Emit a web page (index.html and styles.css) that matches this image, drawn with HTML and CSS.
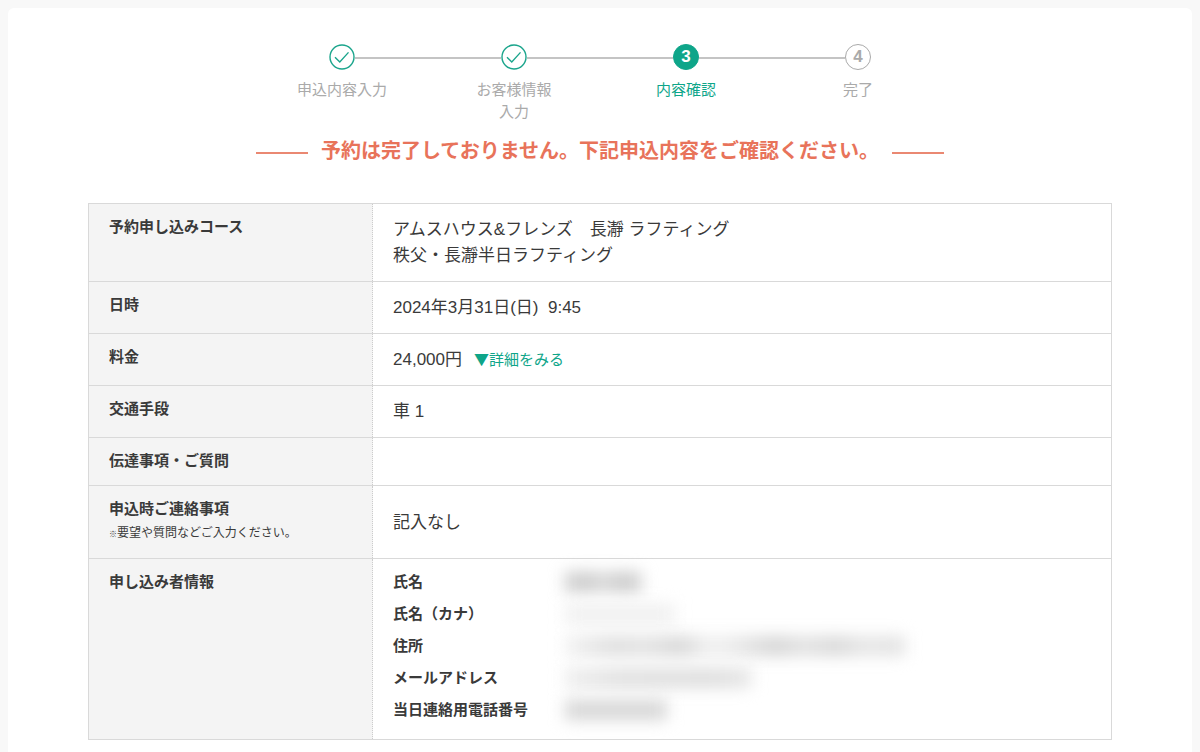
FILE: index.html
```html
<!DOCTYPE html>
<html lang="ja">
<head>
<meta charset="utf-8">
<meta name="viewport" content="width=device-width, initial-scale=1">
<title>内容確認</title>
<link rel="stylesheet" href="styles.css">
</head>
<body>
<main class="panel">
  <ol class="steps">
    <li class="step">
      <svg class="step-mark" viewBox="0 0 26 26" aria-hidden="true"><circle cx="13" cy="13" r="12" fill="#fff" stroke="#1ba58c" stroke-width="1.4"/><path d="M6 13.2 L10.8 18 L19.5 8.4" fill="none" stroke="#1ba58c" stroke-width="1.4"/></svg>
      <span class="step-label">申込内容入力</span>
    </li>
    <li class="step">
      <svg class="step-mark" viewBox="0 0 26 26" aria-hidden="true"><circle cx="13" cy="13" r="12" fill="#fff" stroke="#1ba58c" stroke-width="1.4"/><path d="M6 13.2 L10.8 18 L19.5 8.4" fill="none" stroke="#1ba58c" stroke-width="1.4"/></svg>
      <span class="step-label">お客様情報<br>入力</span>
    </li>
    <li class="step step-current" aria-current="step">
      <span class="step-mark step-number">3</span>
      <span class="step-label">内容確認</span>
    </li>
    <li class="step">
      <span class="step-mark step-number">4</span>
      <span class="step-label">完了</span>
    </li>
  </ol>

  <h1 class="notice">予約は完了しておりません。下記申込内容をご確認ください。</h1>

  <table class="summary">
    <tr>
      <th scope="row">予約申し込みコース</th>
      <td>アムスハウス&amp;フレンズ　長瀞 ラフティング<br>秩父・長瀞半日ラフティング</td>
    </tr>
    <tr>
      <th scope="row">日時</th>
      <td>2024年3月31日(日)&nbsp; 9:45</td>
    </tr>
    <tr>
      <th scope="row">料金</th>
      <td>24,000円<button class="detail" type="button">▼詳細をみる</button></td>
    </tr>
    <tr>
      <th scope="row">交通手段</th>
      <td>車 1</td>
    </tr>
    <tr>
      <th scope="row">伝達事項・ご質問</th>
      <td></td>
    </tr>
    <tr>
      <th scope="row">申込時ご連絡事項<small class="hint"><span class="hint-mark">※</span>要望や質問などご入力ください。</small></th>
      <td>記入なし</td>
    </tr>
    <tr>
      <th scope="row">申し込み者情報</th>
      <td class="applicant-cell">
        <dl class="applicant">
          <dt>氏名</dt>
          <dd><span class="masked masked-name"></span></dd>
          <dt>氏名（カナ）</dt>
          <dd><span class="masked masked-kana"></span></dd>
          <dt>住所</dt>
          <dd><span class="masked masked-address"></span></dd>
          <dt>メールアドレス</dt>
          <dd><span class="masked masked-mail"></span></dd>
          <dt>当日連絡用電話番号</dt>
          <dd><span class="masked masked-phone"></span></dd>
        </dl>
      </td>
    </tr>
  </table>
</main>
</body>
</html>
```

FILE: styles.css
```css
* {
  box-sizing: border-box;
}

body {
  margin: 0;
  padding: 8px 8px 0;
  background: #f8f8f8;
  color: #3a3a3a;
  font-family: "Liberation Sans", "Noto Sans CJK JP", sans-serif;
  font-size: 17px;
  line-height: 26px;
}

.panel {
  min-height: calc(100vh - 8px);
  padding: 36px 80px 13px;
  border-radius: 6px 6px 0 0;
  background: #fff;
}

/* Progress */
.steps {
  display: flex;
  max-width: 688px;
  margin: 0 auto;
  padding: 0;
  list-style: none;
}

.step {
  position: relative;
  display: flex;
  flex: 1;
  flex-direction: column;
  align-items: center;
  gap: 9px;
  color: #aaa;
}

.step + .step::before {
  content: "";
  position: absolute;
  top: 13px;
  right: calc(50% + 13px);
  width: calc(100% - 26px);
  height: 2px;
  background: #c4c4c4;
}

.step-mark {
  width: 26px;
  height: 26px;
}

.step-number {
  display: flex;
  align-items: center;
  justify-content: center;
  border: 1px solid #aaa;
  border-radius: 50%;
  font-size: 17px;
  font-weight: bold;
  line-height: 24px;
}

.step-current {
  color: #0ea589;
}

.step-current .step-number {
  border-color: #0ea589;
  background: #0ea589;
  color: #fff;
}

.step-label {
  font-size: 15px;
  line-height: 22px;
  text-align: center;
}

.notice {
  display: flex;
  align-items: center;
  justify-content: space-between;
  gap: 12px;
  max-width: 688px;
  margin: 13px auto 37px;
  color: #e8735a;
  font-size: 20px;
  font-weight: bold;
  line-height: 30px;
}

.notice::before,
.notice::after {
  content: "";
  width: 52px;
  height: 2px;
  margin-top: 4px;
  background: #ea8872;
}

/* Reservation table */
.summary {
  width: 100%;
  border: 1px solid #d9d9d9;
  border-collapse: collapse;
}

.summary th,
.summary td {
  border-top: 1px solid #d9d9d9;
  border-bottom: 1px solid #d9d9d9;
  text-align: left;
}

.summary th {
  width: 284px;
  padding: 11px 20px 13px;
  border-right: 1px dotted #ccc;
  background: #f4f4f4;
  font-size: 15px;
  line-height: 23px;
  vertical-align: top;
}

.summary td {
  padding: 13px 20px 12px;
}

.hint {
  display: block;
  margin-top: 2px;
  font-size: 12px;
  font-weight: normal;
}

.hint-mark {
  font-size: 8px;
  line-height: 1;
}

.detail {
  margin: 0 0 0 12px;
  padding: 0;
  border: 0;
  background: none;
  color: #0ea589;
  font-family: "Noto Sans CJK JP", sans-serif;
  font-size: 15px;
  line-height: 22px;
  cursor: pointer;
}

.summary .applicant-cell {
  padding: 7px 20px 13px;
}

.applicant {
  display: grid;
  grid-template-columns: 172px 1fr;
  grid-auto-rows: 32px;
  align-items: center;
  margin: 0;
}

.applicant dt {
  font-size: 15px;
  font-weight: bold;
}

.applicant dd {
  margin: 0;
}

.masked {
  display: block;
  height: 20px;
  max-width: 100%;
  background: #e2e2e2;
  filter: blur(8px);
}

.masked-name {
  width: 76px;
  background: linear-gradient(90deg, #ccc 40%, #e0e0e0 50%, #ccc 62%);
}

.masked-kana {
  width: 110px;
  background: #f0f0f0;
}

.masked-address {
  width: 340px;
  background: linear-gradient(90deg, #f2f2f2, #dedede 14%, #e2e2e2 24%, #d6d6d6 34%, #efefef 42%, #ececec 48%, #d4d4d4 62%, #e2e2e2 70%, #d8d8d8 80%, #e6e6e6 88%, #e2e2e2);
}

.masked-mail {
  width: 186px;
  background: linear-gradient(90deg, #eee, #e0e0e0 30%, #dedede 80%, #e6e6e6);
}

.masked-phone {
  width: 102px;
  background: #d6d6d6;
}
```
